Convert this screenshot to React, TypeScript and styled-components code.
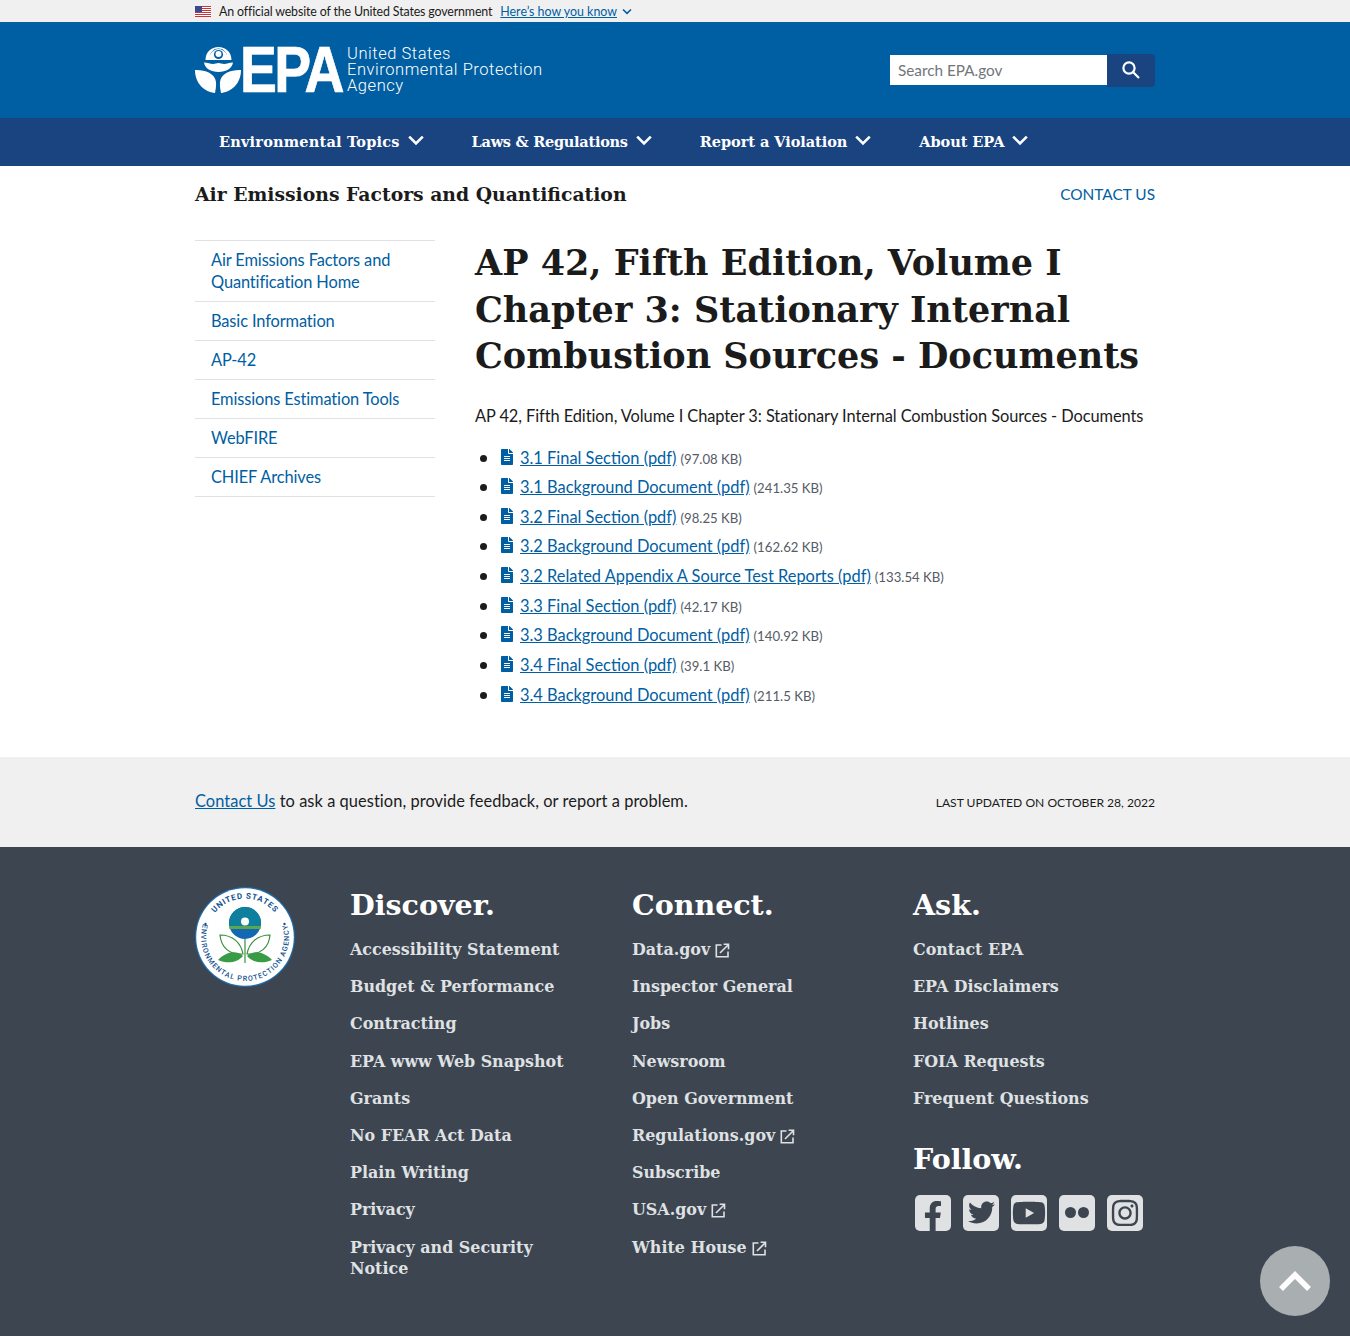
import React from "react";
import styled, { createGlobalStyle } from "styled-components";
import { FaFileAlt, FaFacebookF, FaTwitter, FaYoutube, FaInstagram } from "react-icons/fa";

const SANS = `Lato, "Noto Sans", sans-serif`;
const SERIF = `"DejaVu Serif", "Liberation Serif", serif`;
const BLUE = "#005ea2";
const NAVY = "#1a4480";
const DARK = "#1b1b1b";
const SLATE = "#3d4551";
const LIGHT = "#f0f0f0";

const Global = createGlobalStyle`
  html, body { margin: 0; padding: 0; background: #fff; }
  body { font-family: ${SANS}; color: ${DARK}; }
  * { box-sizing: border-box; }
`;

const Page = styled.div`
  position: relative;
  width: 100%;
  height: 1336px;
  overflow: hidden;
`;
const Wrap = styled.div`
  width: 960px;
  margin: 0 auto;
`;
const Banner = styled.div`
  background: ${LIGHT};
  height: 22px;
`;
const BannerRow = styled(Wrap)`
  display: flex;
  align-items: center;
  height: 22px;
  padding-top: 1px;
  font-size: 12.4px;
  letter-spacing: -0.14px;
  line-height: 21px;
`;
const FlagSvg = styled.svg`
  width: 16px;
  height: 11px;
  margin-right: 8px;
  flex: none;
`;
const BannerLink = styled.a`
  color: ${BLUE};
  text-decoration: underline;
  letter-spacing: 0;
  margin-left: 8px;
`;
const BannerCaret = styled.svg`
  width: 10px;
  height: 7px;
  margin-left: 5px;
`;
const Header = styled.div`
  background: ${BLUE};
  height: 96px;
`;
const HeaderRow = styled(Wrap)`
  display: flex;
  align-items: center;
  justify-content: space-between;
  height: 96px;
`;
const Logo = styled.div`
  display: flex;
  align-items: center;
  color: #fff;
`;
const LogoMark = styled.svg`
  width: 46px;
  height: 46px;
  flex: none;
`;
const LogoLetters = styled.span`
  font-family: "Liberation Sans", sans-serif;
  font-weight: 700;
  font-size: 64px;
  line-height: 46px;
  letter-spacing: -3px;
  margin-left: -1px;
  width: 107px;
  white-space: nowrap;
  transform: scaleX(0.865);
  transform-origin: left center;
  -webkit-text-stroke: 0.7px #fff;
`;
const LogoName = styled.div`
  font-family: Roboto, sans-serif;
  font-weight: 300;
  font-size: 16.5px;
  line-height: 16px;
  letter-spacing: 0.55px;
  white-space: nowrap;
`;
const Search = styled.form`
  display: flex;
  align-items: center;
  margin: 0;
`;
const SearchInput = styled.div`
  width: 217px;
  height: 30px;
  background: #fff;
  color: #71767a;
  font-size: 15.3px;
  line-height: 30px;
  padding-left: 8px;
`;
const SearchButton = styled.div`
  width: 48px;
  height: 33px;
  background: ${NAVY};
  border-radius: 0 4px 4px 0;
  display: flex;
  align-items: center;
  justify-content: center;
`;
const Nav = styled.div`
  background: ${NAVY};
  height: 48px;
`;
const NavRow = styled(Wrap)`
  display: flex;
  height: 48px;
`;
const NavItem = styled.div<{ $track: number }>`
  display: flex;
  align-items: center;
  padding: 0 24px 2px;
  color: #fff;
  font-family: ${SERIF};
  font-weight: 700;
  font-size: 14.5px;
  letter-spacing: ${(p) => p.$track}px;
  white-space: nowrap;
  svg { margin-left: 8px; }
`;
const TitleRow = styled(Wrap)`
  display: flex;
  align-items: flex-start;
  justify-content: space-between;
  height: 56px;
`;
const SiteTitle = styled.div`
  font-family: ${SERIF};
  font-weight: 700;
  font-size: 18.8px;
  line-height: 56px;
  white-space: nowrap;
`;
const ContactTop = styled.a`
  color: ${BLUE};
  font-size: 15.4px;
  line-height: 56px;
  text-transform: uppercase;
`;
const Content = styled(Wrap)`
  display: flex;
  padding-top: 18px;
  height: 535px;
`;
const Side = styled.ul`
  list-style: none;
  margin: 0 40px 0 0;
  padding: 0;
  width: 240px;
  flex: none;
  align-self: flex-start;
  border-top: 1px solid #dfe1e2;
`;
const SideItem = styled.li`
  border-bottom: 1px solid #dfe1e2;
  padding: 8px 16px;
  font-size: 16.4px;
  letter-spacing: -0.12px;
  line-height: 22px;
  color: ${BLUE};
`;
const Main = styled.div`
  flex: 1;
  min-width: 0;
`;
const Heading = styled.h1`
  margin: 0;
  font-family: ${SERIF};
  font-weight: 700;
  font-size: 35px;
  line-height: 46.5px;
  white-space: nowrap;
`;
const Intro = styled.p`
  margin: 23px 0 14px;
  font-size: 16.4px;
  letter-spacing: -0.08px;
  line-height: 26px;
  white-space: nowrap;
`;
const DocList = styled.ul`
  list-style: none;
  margin: 0;
  padding: 0 0 0 25px;
`;
const DocItem = styled.li`
  font-size: 16.4px;
  line-height: 29.63px;
  height: 29.63px;
  white-space: nowrap;
  &::before {
    content: "";
    display: inline-block;
    width: 7px;
    height: 7px;
    border-radius: 50%;
    background: ${DARK};
    margin-left: -20px;
    margin-right: 13px;
    vertical-align: 2px;
  }
`;
const DocIcon = styled(FaFileAlt)`
  color: ${BLUE};
  width: 14px;
  height: 16px;
  margin-right: 6px;
  vertical-align: -1px;
`;
const DocLink = styled.a`
  color: ${BLUE};
  text-decoration: underline;
`;
const Size = styled.span`
  color: #565c65;
  font-size: 13.2px;
  margin-left: 4px;
`;
const Band = styled.div`
  background: ${LIGHT};
  height: 90px;
`;
const BandRow = styled(Wrap)`
  display: flex;
  align-items: center;
  justify-content: space-between;
  height: 87px;
  font-size: 16.4px;
`;
const BandLink = styled.a`
  color: ${BLUE};
  text-decoration: underline;
`;
const BandText = styled.span`
  letter-spacing: 0.06px;
`;
const Updated = styled.span`
  font-size: 12.1px;
  text-transform: uppercase;
  margin-top: 3px;
`;
const Foot = styled.div`
  background: ${SLATE};
  height: 489px;
  color: #fff;
`;
const FootGrid = styled(Wrap)`
  display: grid;
  grid-template-columns: 155px 282px 281px 1fr;
  padding-top: 40px;
`;
const Seal = styled.svg`
  width: 100px;
  height: 100px;
  display: block;
`;
const ColTitle = styled.div<{ $follow?: boolean }>`
  font-family: ${SERIF};
  font-weight: 700;
  font-size: 28.5px;
  line-height: 36px;
  margin-bottom: 8px;
  margin-top: ${(p) => (p.$follow ? "24px" : "0")};
`;
const FootList = styled.div`
  display: flex;
  flex-direction: column;
  width: 240px;
`;
const FootLink = styled.div`
  font-family: ${SERIF};
  font-weight: 700;
  font-size: 15.9px;
  line-height: 21px;
  padding: 8.1px 0;
  color: #dfe1e2;
  svg { margin-left: 5px; vertical-align: -3px; }
`;
const Socials = styled.div`
  display: flex;
  gap: 12px;
  margin-top: 18px;
  padding-left: 2px;
`;
const Social = styled.div<{ $clip?: boolean }>`
  width: 36px;
  height: 36px;
  background: #dfe1e2;
  border-radius: 5px;
  color: ${SLATE};
  display: flex;
  align-items: ${(p) => (p.$clip ? "flex-end" : "center")};
  justify-content: center;
  overflow: hidden;
`;
const Flickr = styled.div`
  display: flex;
  gap: 2px;
`;
const FlickrDot = styled.span`
  width: 11px;
  height: 11px;
  border-radius: 50%;
  background: ${SLATE};
`;
const TopButton = styled.div`
  position: absolute;
  left: 1260px;
  top: 1246px;
  width: 70px;
  height: 70px;
  border-radius: 50%;
  background: #a9aeb1;
  display: flex;
  align-items: center;
  justify-content: center;
`;

const Chevron = ({ size = 16 }: { size?: number }) => (
  <svg width={size} height={size * 0.7} viewBox="0 0 16 11" fill="none" stroke="#fff" strokeWidth="2.6">
    <path d="M1.2 1.6 8 8.4l6.8-6.8" />
  </svg>
);

const External = () => (
  <svg width="15" height="15" viewBox="0 0 15 15" fill="none" stroke="#dfe1e2" strokeWidth="1.6">
    <path d="M6.5 2H1.3v11.7H13V8.5" />
    <path d="M5 10l8-8M8.6 1.3h4.9v4.9" />
  </svg>
);

const Flag = () => (
  <FlagSvg viewBox="0 0 16 11">
    <rect width="16" height="11" fill="#fff" />
    {[0, 2, 4, 6, 8, 10].map((y) => (
      <rect key={y} y={y} width="16" height="1" fill="#c8363c" />
    ))}
    <rect width="7" height="6" fill="#3c4a8c" />
  </FlagSvg>
);

const Mark = () => (
  <LogoMark viewBox="0 0 46 46" fill="#fff">
    <path d="M10.500 13C10.500 5 16.500 0 23.500 0S36.500 5 36.500 13H29.500c1.500-1 2.300-2.500 2.300-4.200 0-2-1-3.500-2.300-4.800-1.500-1.800-3.700-2.500-6-2.500s-4.500.7-6 2.500c-1.300 1.300-2.300 2.800-2.300 4.800 0 1.700.8 3.200 2.300 4.200z" />
    <path d="M14 13c0-6 4-11 9.500-11S33 7 33 13z" />
    <circle cx="23.500" cy="7.500" r="4.600" fill="#005ea2" />
    <circle cx="23.500" cy="7" r="3" fill="#fff" />
    <path d="M9 15.500c4 0 6 1.500 9 1.500 2.200 0 3.500-1 5.500-1s3.300 1 5.500 1c3 0 5-1.500 9-1.500-1 6-6.800 9.500-14.500 9.500S10 21.500 9 15.500z" />
    <path d="M0 23c9-.5 20 3 21 12 .4 4-.5 8-1 11C10 45 0 37 0 23z" />
    <path d="M46 23c-9-.5-20 3-21 12-.4 4 .5 8 1 11 10-1 20-9 20-23z" />
  </LogoMark>
);

const SealArt = () => (
  <Seal viewBox="0 0 100 100">
    <defs>
      <path id="sealTop" d="M50 50m-38.500 0a38.500 38.500 0 1 1 77 0" />
      <path id="sealBottom" d="M50 6a44 44 0 1 0 .01 0" />
    </defs>
    <circle cx="50" cy="50" r="50" fill="#1c6fb0" />
    <circle cx="50" cy="50" r="48.800" fill="#fff" />
    <text fill="#12518f" fontFamily="Roboto, sans-serif" fontWeight="700" fontSize="8" letterSpacing="0.800">
      <textPath href="#sealTop" startOffset="50%" textAnchor="middle">UNITED STATES</textPath>
    </text>
    <text fill="#12518f" fontFamily="Roboto, sans-serif" fontWeight="500" fontSize="7.200" letterSpacing="1">
      <textPath href="#sealBottom" startOffset="50%" textAnchor="middle">ENVIRONMENTAL PROTECTION AGENCY</textPath>
    </text>
    <circle cx="10.500" cy="37" r="1.200" fill="#12518f" />
    <circle cx="89.500" cy="37" r="1.200" fill="#12518f" />
    <circle cx="50" cy="36" r="16" fill="#1268b3" />
    <path d="M34 36a16 16 0 0 1 32 0v3H34z" fill="#0f7f9e" />
    <rect x="34.300" y="39" width="31.400" height="3" fill="#5aa84a" />
    <circle cx="50" cy="34.500" r="4" fill="#fff" />
    <path d="M49.400 52h1.200v24h-1.200z" fill="#3a8f3f" />
    <path d="M48 67C46 56 38 48 25 48c1 12 9 20 23 19z" fill="#fff" stroke="#3a8f3f" strokeWidth="1.200" />
    <path d="M52 67C54 56 62 48 75 48c-1 12-9 20-23 19z" fill="#fff" stroke="#3a8f3f" strokeWidth="1.200" />
    <path d="M48 69C40 62 30 66 23 73c9 4 19 3 25-4z" fill="#3a9b47" />
    <path d="M52 69C60 62 70 66 77 73c-9 4-19 3-25-4z" fill="#3a9b47" />
  </Seal>
);

const docs: [string, string][] = [
  ["3.1 Final Section (pdf)", "(97.08 KB)"],
  ["3.1 Background Document (pdf)", "(241.35 KB)"],
  ["3.2 Final Section (pdf)", "(98.25 KB)"],
  ["3.2 Background Document (pdf)", "(162.62 KB)"],
  ["3.2 Related Appendix A Source Test Reports (pdf)", "(133.54 KB)"],
  ["3.3 Final Section (pdf)", "(42.17 KB)"],
  ["3.3 Background Document (pdf)", "(140.92 KB)"],
  ["3.4 Final Section (pdf)", "(39.1 KB)"],
  ["3.4 Background Document (pdf)", "(211.5 KB)"],
];
const side = [
  "Air Emissions Factors and Quantification Home",
  "Basic Information",
  "AP-42",
  "Emissions Estimation Tools",
  "WebFIRE",
  "CHIEF Archives",
];
const discover = [
  "Accessibility Statement",
  "Budget & Performance",
  "Contracting",
  "EPA www Web Snapshot",
  "Grants",
  "No FEAR Act Data",
  "Plain Writing",
  "Privacy",
  "Privacy and Security Notice",
];
const connect: [string, boolean][] = [
  ["Data.gov", true],
  ["Inspector General", false],
  ["Jobs", false],
  ["Newsroom", false],
  ["Open Government", false],
  ["Regulations.gov", true],
  ["Subscribe", false],
  ["USA.gov", true],
  ["White House", true],
];
const ask = ["Contact EPA", "EPA Disclaimers", "Hotlines", "FOIA Requests", "Frequent Questions"];
const nav: [string, number][] = [
  ["Environmental Topics", 0.2],
  ["Laws & Regulations", -0.26],
  ["Report a Violation", -0.05],
  ["About EPA", -0.05],
];

export default function App() {
  return (
    <Page>
      <Global />
      <Banner>
        <BannerRow>
          <Flag />
          An official website of the United States government
          <BannerLink>Here’s how you know</BannerLink>
          <BannerCaret viewBox="0 0 10 7" fill="none" stroke={BLUE} strokeWidth="1.600">
            <path d="M1 1.500 5 5.300 9 1.500" />
          </BannerCaret>
        </BannerRow>
      </Banner>
      <Header>
        <HeaderRow>
          <Logo>
            <Mark />
            <LogoLetters>EPA</LogoLetters>
            <LogoName>
              United States
              <br />
              Environmental Protection
              <br />
              Agency
            </LogoName>
          </Logo>
          <Search>
            <SearchInput>Search EPA.gov</SearchInput>
            <SearchButton>
              <svg width="20" height="20" viewBox="0 0 20 20" fill="none" stroke="#fff" strokeWidth="2.200">
                <circle cx="8" cy="8" r="5.600" />
                <path d="m12 12 6 6" />
              </svg>
            </SearchButton>
          </Search>
        </HeaderRow>
      </Header>
      <Nav>
        <NavRow>
          {nav.map(([n, t]) => (
            <NavItem key={n} $track={t}>
              {n}
              <Chevron />
            </NavItem>
          ))}
        </NavRow>
      </Nav>
      <TitleRow>
        <SiteTitle>Air Emissions Factors and Quantification</SiteTitle>
        <ContactTop>Contact Us</ContactTop>
      </TitleRow>
      <Content>
        <Side>
          {side.map((s) => (
            <SideItem key={s}>{s}</SideItem>
          ))}
        </Side>
        <Main>
          <Heading>
            AP 42, Fifth Edition, Volume I
            <br />
            Chapter 3: Stationary Internal
            <br />
            Combustion Sources - Documents
          </Heading>
          <Intro>AP 42, Fifth Edition, Volume I Chapter 3: Stationary Internal Combustion Sources - Documents</Intro>
          <DocList>
            {docs.map(([t, s]) => (
              <DocItem key={t}>
                <DocIcon />
                <DocLink>{t}</DocLink>
                <Size>{s}</Size>
              </DocItem>
            ))}
          </DocList>
        </Main>
      </Content>
      <Band>
        <BandRow>
          <BandText>
            <BandLink>Contact Us</BandLink> to ask a question, provide feedback, or report a problem.
          </BandText>
          <Updated>Last updated on October 28, 2022</Updated>
        </BandRow>
      </Band>
      <Foot>
        <FootGrid>
          <SealArt />
          <div>
            <ColTitle>Discover.</ColTitle>
            <FootList>
              {discover.map((d) => (
                <FootLink key={d}>{d}</FootLink>
              ))}
            </FootList>
          </div>
          <div>
            <ColTitle>Connect.</ColTitle>
            <FootList>
              {connect.map(([d, e]) => (
                <FootLink key={d}>
                  {d}
                  {e && <External />}
                </FootLink>
              ))}
            </FootList>
          </div>
          <div>
            <ColTitle>Ask.</ColTitle>
            <FootList>
              {ask.map((d) => (
                <FootLink key={d}>{d}</FootLink>
              ))}
            </FootList>
            <ColTitle $follow>Follow.</ColTitle>
            <Socials>
              <Social $clip>
                <FaFacebookF size={30} />
              </Social>
              <Social>
                <FaTwitter size={27} />
              </Social>
              <Social>
                <FaYoutube size={34} />
              </Social>
              <Social>
                <Flickr>
                  <FlickrDot />
                  <FlickrDot />
                </Flickr>
              </Social>
              <Social>
                <FaInstagram size={30} />
              </Social>
            </Socials>
          </div>
        </FootGrid>
      </Foot>
      <TopButton>
        <svg width="34" height="24" viewBox="0 0 34 24" fill="none" stroke="#fff" strokeWidth="5.500">
          <path d="M3 20 17 6l14 14" />
        </svg>
      </TopButton>
    </Page>
  );
}
